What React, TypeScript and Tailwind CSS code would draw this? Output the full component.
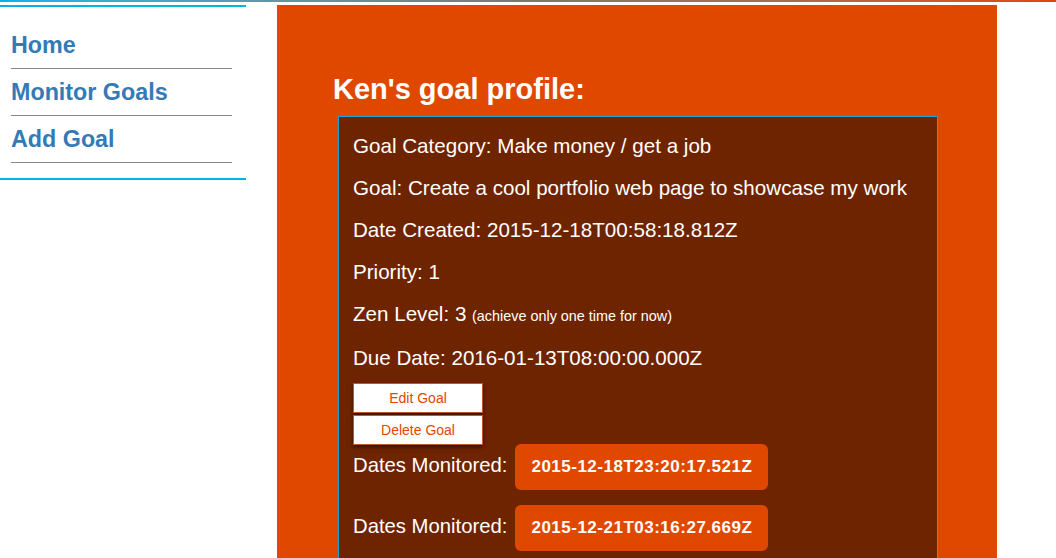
export default function App() {
  const font = { fontFamily: '"Liberation Sans", Arial, sans-serif' };

  const lines = [
    "Goal Category: Make money / get a job",
    "Goal: Create a cool portfolio web page to showcase my work",
    "Date Created: 2015-12-18T00:58:18.812Z",
    "Priority: 1",
  ];

  const monitored = ["2015-12-18T23:20:17.521Z", "2015-12-21T03:16:27.669Z"];

  return (
    <div className="h-[558px] w-[1056px] overflow-hidden bg-white" style={font}>
      <div className="h-[2px] bg-gradient-to-r from-[#00b4e4] via-[#7a7a6e] to-[#e04800]" />
      <div className="mt-[3px] flex items-start">
        <nav className="w-[246px] border-t-2 border-b-2 border-[#00b4e0] pt-[15px] pb-[15px]">
          <ul className="ml-[11px] w-[221px]">
            {["Home", "Monitor Goals", "Add Goal"].map((item) => (
              <li
                key={item}
                className="flex h-[47px] items-center border-b border-[#888888] pt-[2px] text-[23.3px] font-bold leading-none text-[#337ab7]"
              >
                {item}
              </li>
            ))}
          </ul>
        </nav>

        <main className="ml-[31px] h-[553px] w-[720px] bg-[#e04800] pt-[70px]">
          <h2 className="ml-[56px] text-[29px] font-bold leading-none text-white">
            Ken's goal profile:
          </h2>
          <section className="ml-[61px] mt-[12px] w-[600px] border border-[#1aa6d6] bg-[#6f2400] px-[14px] pt-[15px] pb-[10px] text-white">
            {lines.map((line) => (
              <p key={line} className="mb-[14px] text-[20.6px] leading-[28px]">
                {line}
              </p>
            ))}
            <p className="mb-[14px] text-[20.6px] leading-[28px]">
              Zen Level: 3 <span className="text-[14.4px]">(achieve only one time for now)</span>
            </p>
            <p className="mb-[11px] text-[20.6px] leading-[28px]">Due Date: 2016-01-13T08:00:00.000Z</p>

            <div className="flex flex-col gap-[2px]">
              <button className="h-[30px] w-[130px] border border-[#c4562c] bg-white text-[14px] text-[#e04800] shadow-[0_2px_4px_rgba(0,0,0,0.55)]">
                Edit Goal
              </button>
              <button className="h-[30px] w-[130px] border border-[#c4562c] bg-white text-[14px] text-[#e04800] shadow-[0_2px_4px_rgba(0,0,0,0.55)]">
                Delete Goal
              </button>
            </div>

            <div className="-mt-[1px] flex flex-col gap-[15px]">
              {monitored.map((d) => (
                <div key={d} className="flex items-baseline gap-[8px]">
                  <span className="text-[20.3px] leading-none">Dates Monitored:</span>
                  <span className="flex h-[46px] items-center rounded-[6px] bg-[#e04800] px-[16px] text-[17px] font-bold tracking-[0.5px]">
                    {d}
                  </span>
                </div>
              ))}
            </div>
          </section>
        </main>
      </div>
    </div>
  );
}
